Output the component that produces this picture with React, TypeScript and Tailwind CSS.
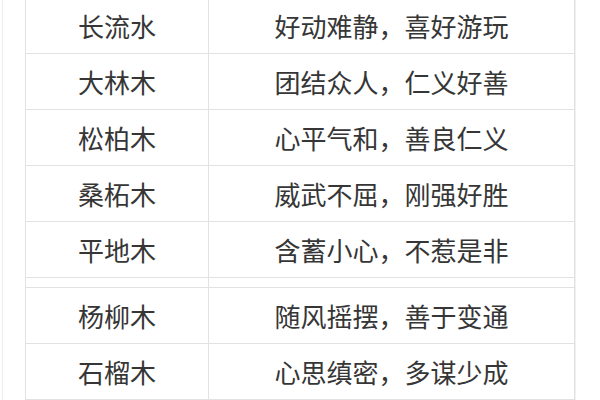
import React from "react";

const rows1 = [
  ["长流水", "好动难静，喜好游玩"],
  ["大林木", "团结众人，仁义好善"],
  ["松柏木", "心平气和，善良仁义"],
  ["桑柘木", "威武不屈，刚强好胜"],
  ["平地木", "含蓄小心，不惹是非"],
];
const rows2 = [
  ["杨柳木", "随风摇摆，善于变通"],
  ["石榴木", "心思缜密，多谋少成"],
];

function Row({ a, b }: { a: string; b: string }) {
  return (
    <div className="flex h-[57px] border-b border-[#e2e2e2]">
      <div className="w-[183px] flex items-center justify-center border-r border-[#e2e2e2]">{a}</div>
      <div className="flex-1 flex items-center justify-center">{b}</div>
    </div>
  );
}

export default function App() {
  return (
    <div
      className="w-[600px] h-[400px] overflow-hidden bg-white text-[26px] text-[#363636] flex"
      style={{ fontFamily: '"Noto Sans CJK SC", "Noto Sans", sans-serif' }}
    >
      <div className="w-[2px]" />
      <div className="w-[23px] border-l border-[#ececec]" />
      <div className="w-[550px] -mt-[2px] border-l border-r border-[#e2e2e2] flex flex-col">
        {rows1.map(([a, b]) => (
          <Row key={a} a={a} b={b} />
        ))}
        <div className="flex h-[10px] border-b border-[#e2e2e2]">
          <div className="w-[183px] border-r border-[#e2e2e2]" />
          <div className="flex-1" />
        </div>
        {rows2.map(([a, b]) => (
          <Row key={a} a={a} b={b} />
        ))}
      </div>
      <div className="w-[2px] border-l border-[#f0f0f0]" />
    </div>
  );
}
